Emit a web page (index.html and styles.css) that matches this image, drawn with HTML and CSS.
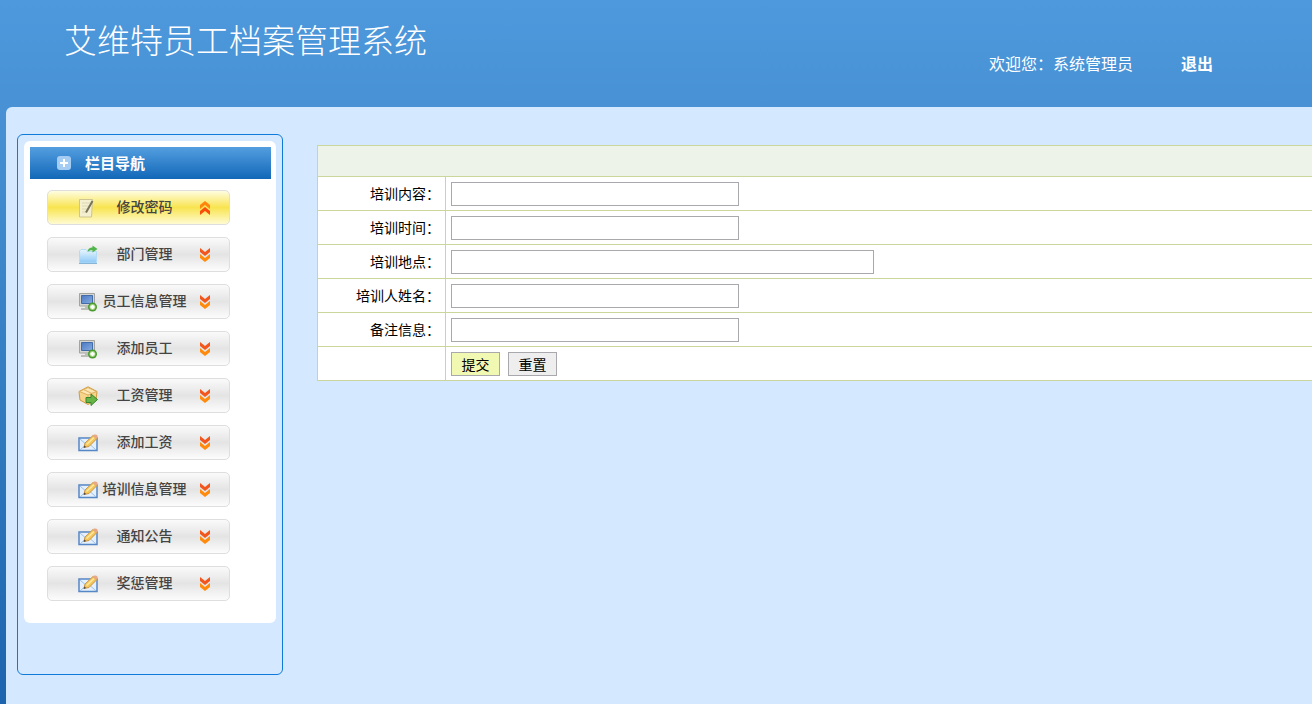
FILE: index.html
```html
<!DOCTYPE html>
<html lang="zh-CN">
<head>
<meta charset="utf-8">
<title>艾维特员工档案管理系统</title>
<link rel="stylesheet" href="styles.css">
</head>
<body>
<svg class="defs" aria-hidden="true">
  <defs>
    <linearGradient id="g-blue" x1="0" y1="0" x2="0" y2="1"><stop offset="0" stop-color="#eaf6ff"/><stop offset="1" stop-color="#8cc8f5"/></linearGradient>
    <linearGradient id="g-screen" x1="0" y1="0" x2="1" y2="1"><stop offset="0" stop-color="#4a78c4"/><stop offset="1" stop-color="#86acdf"/></linearGradient>
    <symbol id="note" viewBox="0 0 20 20">
      <path d="M1.500 1.500H14.500L13.500 19H1.500Z" fill="#f3efcf" stroke="#cdc596"/>
      <path d="M4 5h8M4 8h7M4 11h6M4 14h5" stroke="#ddd7b0"/>
      <path d="M14.500 3 L10 11 L8 14.500" fill="none" stroke="#77735a" stroke-width="2"/>
    </symbol>
    <symbol id="folder" viewBox="0 0 20 20">
      <path d="M1.500 6 L3 4.500H8L10 6.500H18.500V18H1.500Z" fill="url(#g-blue)" stroke="#b4dcf6"/>
      <path d="M1 18.500H19" stroke="#86b5d8"/>
      <path d="M9.500 7C10 3.500 12 2.500 14.500 2.500V0.500L19.500 4L14.500 7.500V5.200C12.500 5 11 5.500 9.500 7Z" fill="#52b54b"/>
    </symbol>
    <symbol id="computer" viewBox="0 0 20 20">
      <path d="M1.500 1.500H16.500V14H1.500Z" fill="#d5d5d2" stroke="#a3a3a0"/>
      <path d="M3.500 3.500H14.500V11.500H3.500Z" fill="url(#g-screen)" stroke="#426ba9"/>
      <path d="M7 14H11V16H13V18H3V16H7Z" fill="#bcbcb8"/>
      <circle cx="14.500" cy="15" r="4.500" fill="#4b9a30"/>
      <circle cx="14.500" cy="15" r="3" fill="#a6d784"/>
      <path d="M14.500 13V17M12.500 15H16.500" stroke="#fff" stroke-width="2"/>
    </symbol>
    <symbol id="box" viewBox="0 0 20 20">
      <path d="M10 .8L19 5.500L18 14L10 18.500L2 14L1 5.500Z" fill="#f6d489" stroke="#cf9b42"/>
      <path d="M1.500 5.500L10 9L18.500 5.500L10 1.500Z" fill="#fbe7b5" stroke="#dcae5b"/>
      <path d="M10 9V18M5.500 3.500L14 7.500" stroke="#dfb261"/>
      <path d="M8 11.500H13V8L19.500 13.500L13 19.500V16.500H8Z" fill="#67b447" stroke="#39852a"/>
    </symbol>
    <symbol id="edit" viewBox="0 0 20 20">
      <path d="M1 5H19V17.500H1Z" fill="#e4f0fd" stroke="#5586c6" stroke-width="1.500"/>
      <path d="M2 6L10 13L18 6M2 17L8 11.500M18 17L12 11.500" fill="none" stroke="#9dc0ea"/>
      <path d="M6 14.500L7 10L15 2.500L19 5.500L11 13.500Z" fill="#f5c659" stroke="#c9974a"/>
      <path d="M14.500 3L16 1.500Q18 1 19.500 2.500Q20 4 19 5L18 6Z" fill="#e7a886"/>
      <path d="M8.500 11.500L16 4.500" stroke="#fce9a2" stroke-width="1.500"/>
      <path d="M5.500 15L6.500 12.500L8 14Z" fill="#433f3a"/>
    </symbol>
    <symbol id="down" viewBox="0 0 12 16">
      <path d="M1 1L6 5L11 1V5L6 9L1 5Z" fill="#f2561c"/>
      <path d="M1 7L6 11L11 7V11L6 15L1 11Z" fill="#ff8a0c"/>
    </symbol>
    <symbol id="up" viewBox="0 0 12 16">
      <path d="M1 9L6 5L11 9V5L6 1L1 5Z" fill="#ff860d"/>
      <path d="M1 15L6 11L11 15V11L6 7L1 11Z" fill="#f94e0b"/>
    </symbol>
  </defs>
</svg>

<header class="header">
  <h1 class="title">艾维特员工档案管理系统</h1>
  <div class="account">
    <span>欢迎您：系统管理员</span>
    <a class="logout" href="#">退出</a>
  </div>
</header>

<div class="page">
  <aside class="sidebar">
    <nav class="panel" aria-label="栏目导航">
      <h2 class="panel-title">
        <svg class="plus" viewBox="0 0 14 14" aria-hidden="true"><rect width="14" height="14" rx="3" fill="#a5ccf2"/><path d="M7 3V11M3 7H11" stroke="#fff" stroke-width="2"/></svg>
        <span>栏目导航</span>
      </h2>
      <ul class="menu">
        <li><a class="item active" href="#"><svg class="icon"><use href="#note"/></svg><span>修改密码</span><svg class="arrow"><use href="#up"/></svg></a></li>
        <li><a class="item" href="#"><svg class="icon"><use href="#folder"/></svg><span>部门管理</span><svg class="arrow"><use href="#down"/></svg></a></li>
        <li><a class="item" href="#"><svg class="icon"><use href="#computer"/></svg><span>员工信息管理</span><svg class="arrow"><use href="#down"/></svg></a></li>
        <li><a class="item" href="#"><svg class="icon"><use href="#computer"/></svg><span>添加员工</span><svg class="arrow"><use href="#down"/></svg></a></li>
        <li><a class="item" href="#"><svg class="icon"><use href="#box"/></svg><span>工资管理</span><svg class="arrow"><use href="#down"/></svg></a></li>
        <li><a class="item" href="#"><svg class="icon"><use href="#edit"/></svg><span>添加工资</span><svg class="arrow"><use href="#down"/></svg></a></li>
        <li><a class="item" href="#"><svg class="icon"><use href="#edit"/></svg><span>培训信息管理</span><svg class="arrow"><use href="#down"/></svg></a></li>
        <li><a class="item" href="#"><svg class="icon"><use href="#edit"/></svg><span>通知公告</span><svg class="arrow"><use href="#down"/></svg></a></li>
        <li><a class="item" href="#"><svg class="icon"><use href="#edit"/></svg><span>奖惩管理</span><svg class="arrow"><use href="#down"/></svg></a></li>
      </ul>
    </nav>
  </aside>

  <main class="content">
    <form>
      <table class="form-table">
        <thead><tr><td colspan="2"></td></tr></thead>
        <tbody>
          <tr><th scope="row"><label for="topic">培训内容：</label></th><td><input class="field" type="text" id="topic"></td></tr>
          <tr><th scope="row"><label for="time">培训时间：</label></th><td><input class="field" type="text" id="time"></td></tr>
          <tr><th scope="row"><label for="place">培训地点：</label></th><td><input class="field wide" type="text" id="place"></td></tr>
          <tr><th scope="row"><label for="person">培训人姓名：</label></th><td><input class="field" type="text" id="person"></td></tr>
          <tr><th scope="row"><label for="remark">备注信息：</label></th><td><input class="field" type="text" id="remark"></td></tr>
          <tr><th></th><td><div class="actions"><button class="btn submit" type="submit">提交</button><button class="btn" type="reset">重置</button></div></td></tr>
        </tbody>
      </table>
    </form>
  </main>
</div>
</body>
</html>
```

FILE: styles.css
```css
* {
  box-sizing: border-box;
}

body {
  margin: 0;
  min-height: 100vh;
  display: flex;
  flex-direction: column;
  background: linear-gradient(#4e99dd, #4791d4 107px, #1c65ae);
  color: #000;
  font-family: "Noto Sans CJK SC", sans-serif;
  font-size: 14px;
}

.defs {
  position: absolute;
  width: 0;
  height: 0;
}

.header {
  height: 107px;
  display: flex;
  justify-content: space-between;
  align-items: flex-start;
  padding: 18px 99px 0 64px;
  background: linear-gradient(#4e99dd, #4791d4);
  color: #fff;
}

.title {
  margin: 0;
  font-size: 33px;
  line-height: 42px;
  font-weight: 300;
}

.account {
  display: flex;
  gap: 48px;
  padding-top: 33px;
  font-size: 16px;
  line-height: 24px;
}

.logout {
  color: #fff;
  font-weight: 700;
  text-decoration: none;
}

.page {
  flex: 1;
  display: flex;
  align-items: flex-start;
  gap: 34px;
  margin-left: 6px;
  padding: 27px 0 29px 11px;
  border-top-left-radius: 6px;
  background: #d4e9ff;
}

.sidebar {
  flex: none;
  width: 266px;
  padding: 6px 6px 51px;
  border: 1px solid #0f7ad8;
  border-radius: 6px;
}

.panel {
  padding: 6px 5px 22px 6px;
  border-radius: 6px;
  background: #fff;
}

.panel-title {
  display: flex;
  align-items: center;
  gap: 14px;
  height: 32px;
  margin: 0;
  padding-left: 27px;
  background: linear-gradient(#549ee0, #1268b8);
  color: #fff;
  font-size: 15px;
  font-weight: 700;
}

.panel-title span {
  padding-bottom: 2px;
}

.plus {
  width: 14px;
  height: 14px;
}

.menu {
  display: grid;
  gap: 12px;
  margin: 0;
  padding: 11px 41px 0 17px;
  list-style: none;
}

.item {
  display: grid;
  grid-template-columns: 20px 1fr 12px;
  align-items: center;
  height: 35px;
  padding: 0 18px 0 30px;
  border: 1px solid #dedede;
  border-radius: 5px;
  background: linear-gradient(#fafafa, #e4e4e4 50%, #fcfcfc);
  color: #444;
  font-size: 14px;
  font-weight: 500;
  line-height: 24px;
  text-align: center;
  text-decoration: none;
  white-space: nowrap;
}

.item span {
  padding: 0 8px 3px 0;
}

.active {
  background: linear-gradient(#fffde0, #f8e450 50%, #fffbd2);
}

.icon {
  width: 20px;
  height: 20px;
}

.arrow {
  width: 12px;
  height: 16px;
}

.content {
  flex: 1;
  min-width: 0;
  padding-top: 11px;
}

.form-table {
  width: 100%;
  border-collapse: collapse;
  border-left: 1px solid #cad69c;
  background: #fff;
}

.form-table tr {
  height: 34px;
}

.form-table thead tr {
  height: 31px;
  background: #edf3e8;
}

.form-table th,
.form-table td {
  padding: 0 5px;
  border: 1px solid #cad69c;
  border-right: 0;
}

.form-table th {
  width: 128px;
  padding-bottom: 2px;
  font-weight: 400;
  text-align: right;
}

.field {
  display: block;
  width: 288px;
  height: 24px;
  padding: 1px 4px;
  border: 1px solid #a9a9ad;
  background: #fff;
  font: inherit;
}

.wide {
  width: 423px;
}

.actions {
  display: flex;
  gap: 8px;
}

.btn {
  width: 49px;
  height: 24px;
  padding: 0;
  border: 1px solid #a9a9ad;
  background: #eee;
  color: #000;
  font: inherit;
  line-height: 20px;
}

.submit {
  background: #f1f8b1;
}
```
